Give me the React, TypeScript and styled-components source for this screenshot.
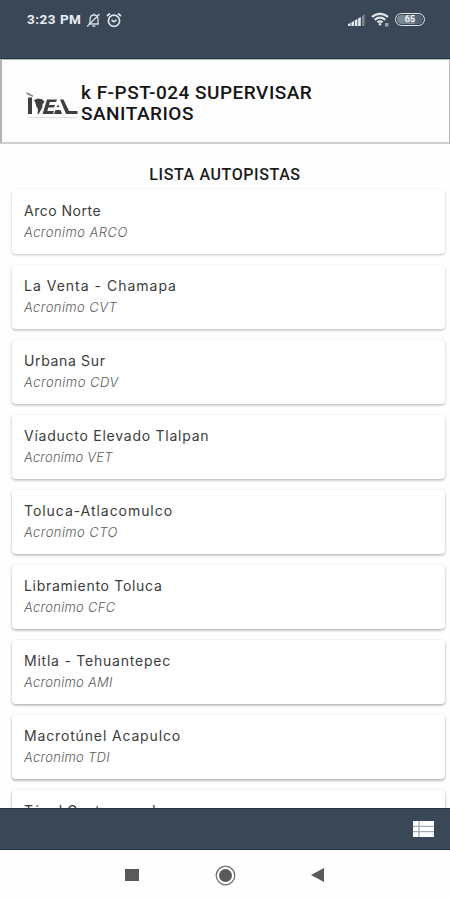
import React from "react";
import styled, { createGlobalStyle } from "styled-components";

const Global = createGlobalStyle`
  * { box-sizing: border-box; }
  html, body { margin: 0; background: #fefefe; }
`;

const Screen = styled.div`
  width: 450px;
  height: 900px;
  display: flex;
  flex-direction: column;
  overflow: hidden;
  background: #fefefe;
  font-family: Roboto, sans-serif;
`;

const StatusBar = styled.header`
  height: 59px;
  flex: none;
  display: flex;
  justify-content: space-between;
  align-items: flex-start;
  padding: 11px 25px 0 27px;
  background: #394757;
  border-bottom: 1px solid #25374a;
  color: #e9edf0;
`;

const StatusGroup = styled.div<{ $gap: number }>`
  display: flex;
  align-items: center;
  height: 17px;
  gap: ${(p) => p.$gap}px;
`;

const Clock = styled.span`
  font: 700 13.5px/17px Roboto, sans-serif;
  letter-spacing: 0.5px;
`;

const TitlePanel = styled.section`
  height: 85px;
  flex: none;
  display: flex;
  padding: 22px 0 0 24px;
  background: #fefefe;
  border: solid #b4b4b4;
  border-width: 1px 1px 2px 2px;
  border-bottom-color: #cfcfcf;
`;

const LogoBox = styled.div`
  width: 55px;
  padding-top: 10px;
`;

const Title = styled.h1`
  margin: 0;
  width: 270px;
  font: 500 19px/21px Roboto, sans-serif;
  letter-spacing: 0.5px;
  color: #151515;
`;

const ListHeading = styled.h2`
  margin: 0;
  height: 37px;
  flex: none;
  padding-top: 21px;
  text-align: center;
  font: 500 16px/19px Roboto, sans-serif;
  letter-spacing: 0.6px;
  color: #1c1c1c;
`;

const List = styled.main`
  flex: 1;
  min-height: 0;
  overflow: hidden;
  display: flex;
  flex-direction: column;
  gap: 11px;
  padding: 9px 5px 0 12px;
`;

const Card = styled.article<{ $depth: number }>`
  height: 64px;
  flex: none;
  padding: 10px 12px;
  border-radius: 4px;
  background: #fff;
  box-shadow: 0 1px 3px rgba(0, 0, 0, ${(p) => 0.17 + p.$depth * 0.018}),
    0 ${(p) => 1 + p.$depth * 0.15}px 2px rgba(0, 0, 0, 0.08);
`;

const Name = styled.div<{ $spacing: number }>`
  font: 400 14px/22px Inter, sans-serif;
  letter-spacing: ${(p) => p.$spacing}px;
  color: #3c3c3c;
  white-space: nowrap;
`;

const Acronym = styled.div<{ $spacing: number }>`
  font: italic 300 13px/21px Inter, sans-serif;
  letter-spacing: ${(p) => p.$spacing}px;
  color: #5c5c5c;
  white-space: nowrap;
`;

const Toolbar = styled.footer`
  height: 42px;
  flex: none;
  display: flex;
  align-items: center;
  justify-content: flex-end;
  padding-right: 16px;
  background: #394757;
  border: solid #1d354c;
  border-width: 1px 0;
`;

const NavBar = styled.nav`
  height: 50px;
  flex: none;
  display: flex;
  align-items: center;
  justify-content: space-between;
  padding: 0 126px 0 125px;
`;

const routes = [
  { name: "Arco Norte", code: "ARCO", ns: 0.5, cs: 0.45 },
  { name: "La Venta - Chamapa", code: "CVT", ns: 1, cs: 0.42 },
  { name: "Urbana Sur", code: "CDV", ns: 0.65, cs: 0.5 },
  { name: "Víaducto Elevado Tlalpan", code: "VET", ns: 0.75, cs: 0.2 },
  { name: "Toluca-Atlacomulco", code: "CTO", ns: 0.95, cs: 0.42 },
  { name: "Libramiento Toluca", code: "CFC", ns: 0.7, cs: 0.27 },
  { name: "Mitla - Tehuantepec", code: "AMI", ns: 0.77, cs: 0.27 },
  { name: "Macrotúnel Acapulco", code: "TDI", ns: 0.85, cs: 0.27 },
  { name: "Túnel Guatemozod", code: "TG", ns: 0.5, cs: 0.1 },
];

const MutedBell = () => (
  <svg width="15" height="16" viewBox="0 0 15 16" fill="none" stroke="#d5dbe0" strokeWidth="1.3">
    <path d="M2.5 12h10.5M4 12V7.5C4 4.8 5.6 3 8 3s4 1.8 4 4.5V12M8 3V1.5M6.3 14h3M1.2 14.5L13.5 2" />
  </svg>
);

const AlarmClock = () => (
  <svg width="16" height="16" viewBox="0 0 16 16" fill="none" stroke="#dde2e6" strokeWidth="1.7">
    <circle cx="8" cy="8.8" r="5.6" />
    <path d="M1 4l3-2.5M15 4l-3-2.5M5.6 8l2.2 1.8L10.5 8" />
  </svg>
);

const Signal = () => (
  <svg width="17" height="12" viewBox="0 0 17 12">
    <g fill="#e6eaed">
      <path d="M0 12V10l2.6-1v3zM3.4 12V8.3L6 7v5zM6.8 12V6.3L9.4 5v7zM10.2 12V4.3L12.8 3v9z" />
    </g>
    <path d="M14 12V2l2.6-2v12z" fill="#7a8590" />
  </svg>
);

const Wifi = () => (
  <svg width="18" height="15" viewBox="0 0 18 15" fill="none" stroke="#dfe4e8" strokeWidth="2.3">
    <path d="M1 5C5.5 .7 12.5 .7 17 5M3.800 7.800c3-2.800 7.400-2.800 10.400 0M6.500 10.400c1.600-1.300 3.400-1.300 5 0" />
    <circle cx="9" cy="12.2" r="1.2" fill="#dfe4e8" stroke="none" />
    <rect x="14" y="11" width="3.5" height="3.5" fill="#9ca6af" stroke="none" />
  </svg>
);

const BatteryPill = styled.span`
  width: 30px;
  height: 13px;
  padding: 1px;
  display: flex;
  border: 1.5px solid #dfe4e8;
  border-radius: 7px;
`;

const BatteryLevel = styled.span`
  flex: 1;
  border-radius: 5px;
  background: linear-gradient(90deg, #7b8793 68%, #55626f 68%);
  color: #eef0f2;
  text-align: center;
  font: 700 9px/9px Roboto, sans-serif;
`;

const Logo = () => (
  <svg width="52" height="29" viewBox="0 0 52 29" fill="#3f3f3f">
    <path d="M0 0l7 3.2v1.8L1 2.5z" fill="#888" />
    <path d="M2 5.500h4V22H2z" />
    <path d="M8 8l4-1.500 4 .8 2.500 2.200-2 3-.2 3-3.300 6-1.500 1 .5-5-1.800-3.500-.7-3z" />
    <path d="M21 7.500h10l-1 2.500h-6.200l-.8 3h6l-.9 2.600h-5.800l-1 3.400H28L27 22H16.500z" />
    <path d="M34 7.500h3.500l5.500 11.500h8.500V22H40zM32 12.500l1.500 2.500h-3zM29.500 18h5l1.500 4h-8z" />
    <path d="M2 25h49v1H2z" fill="#dedede" />
  </svg>
);

const ListIcon = () => (
  <svg width="21" height="16" viewBox="0 0 21 16">
    <path d="M0 0h21v16H0z" fill="#fff" />
    <path d="M6 0v16M0 5.3h21M0 10.6h21" stroke="#a3abb3" strokeWidth="1.3" />
  </svg>
);

const SquareIcon = () => (
  <svg width="14" height="12" viewBox="0 0 14 12"><rect width="14" height="12" fill="#5a5a5a" /></svg>
);

const HomeIcon = () => (
  <svg width="21" height="21" viewBox="0 0 21 21">
    <circle cx="10.5" cy="10.5" r="9.3" fill="none" stroke="#707070" strokeWidth="1.3" />
    <circle cx="10.5" cy="10.5" r="6.5" fill="#5a5a5a" />
  </svg>
);

const BackIcon = () => (
  <svg width="13" height="14" viewBox="0 0 13 14"><path d="M0 7L13 0v14z" fill="#5a5a5a" /></svg>
);

export default function App() {
  return (
    <Screen>
      <Global />
      <StatusBar>
        <StatusGroup $gap={5}>
          <Clock>3:23 PM</Clock>
          <MutedBell />
          <AlarmClock />
        </StatusGroup>
        <StatusGroup $gap={6}>
          <Signal />
          <Wifi />
          <BatteryPill><BatteryLevel>65</BatteryLevel></BatteryPill>
        </StatusGroup>
      </StatusBar>
      <TitlePanel>
        <LogoBox><Logo /></LogoBox>
        <Title>k F-PST-024 SUPERVISAR SANITARIOS</Title>
      </TitlePanel>
      <ListHeading>LISTA AUTOPISTAS</ListHeading>
      <List>
        {routes.map((r, i) => (
          <Card key={r.name} $depth={i}>
            <Name $spacing={r.ns}>{r.name}</Name>
            <Acronym $spacing={r.cs}>Acronimo {r.code}</Acronym>
          </Card>
        ))}
      </List>
      <Toolbar><ListIcon /></Toolbar>
      <NavBar>
        <SquareIcon />
        <HomeIcon />
        <BackIcon />
      </NavBar>
    </Screen>
  );
}
